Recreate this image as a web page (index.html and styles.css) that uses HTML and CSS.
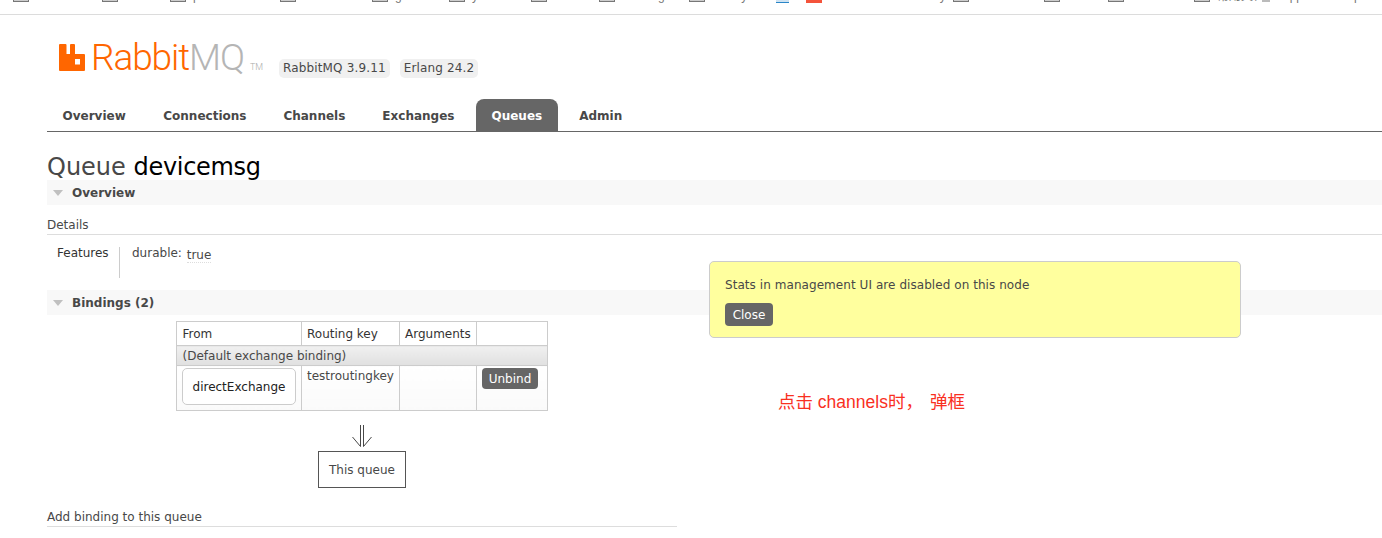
FILE: index.html
```html
<!DOCTYPE html>
<html lang="en">
<head>
  <meta charset="UTF-8" />
  <title>RabbitMQ Management</title>
  <link rel="stylesheet" href="styles.css">
</head>

<body>

  <!-- Bookmarks bar, cut off at the top -->
  <div class="bookmarks">
    <span class="bm"><i class="folder"></i>notes</span>
    <span class="bm"><i class="folder"></i>work</span>
    <span class="bm"><i class="folder"></i>pan</span>
    <span class="bm"><i class="folder"></i>tools</span>
    <span class="bm"><i class="folder"></i>go</span>
    <span class="bm"><i class="folder"></i>yaml</span>
    <span class="bm"><i class="folder"></i>docs</span>
    <span class="bm"><i class="folder"></i>learning</span>
    <span class="bm"><i class="folder"></i>history</span>
    <span class="bm"><i class="fav blue"></i></span>
    <span class="bm"><i class="fav red"></i>mathematics notes dy</span>
    <span class="bm"><i class="folder"></i>mail</span>
    <span class="bm"><i class="folder"></i>misc</span>
    <span class="bm"><i class="folder"></i>links</span>
    <span class="bm"><i class="folder"></i>常用文档</span>
    <span class="bm bm-app"><i class="fav grey"></i>app</span>
    <span class="bm">qtx</span>
  </div>

  <div class="page">
    <!-- Header -->
    <header class="header">
      <div class="logo">
        <svg class="logo-icon" width="26" height="27" viewBox="0 0 26 27">
          <path fill="#ff6600" fill-rule="evenodd" d="M1 0h5.500a1 1 0 0 1 1 1v9h3.500V1a1 1 0 0 1 1-1H15a1 1 0 0 1 1 1v9h9a1 1 0 0 1 1 1v15a1 1 0 0 1-1 1H1a1 1 0 0 1-1-1V1a1 1 0 0 1 1-1zM16 15v5.500h5V15z" />
        </svg>
        <span class="logo-rabbit">Rabbit</span><span class="logo-mq">MQ</span><span class="logo-tm">TM</span>
      </div>
      <span class="version">RabbitMQ 3.9.11</span>
      <span class="version">Erlang 24.2</span>
    </header>

    <!-- Navigation -->
    <nav class="tabs">
      <a href="#">Overview</a>
      <a href="#">Connections</a>
      <a href="#">Channels</a>
      <a href="#">Exchanges</a>
      <a href="#" class="active">Queues</a>
      <a href="#">Admin</a>
    </nav>

    <h1>Queue <b>devicemsg</b></h1>

    <div class="section-head"><i class="arrow"></i>Overview</div>
    <h3 class="subhead">Details</h3>
    <div class="features">
      <div class="features-label">Features</div>
      <div class="features-value">durable: <span class="tag">true</span></div>
    </div>

    <div class="section-head"><i class="arrow"></i>Bindings (2)</div>
    <div class="bindings">
      <table>
        <tr>
          <th class="col-from">From</th>
          <th class="col-key">Routing key</th>
          <th class="col-args">Arguments</th>
          <th class="col-btn"></th>
        </tr>
        <tr class="group"><td colspan="4">(Default exchange binding)</td></tr>
        <tr class="row">
          <td><span class="exchange">directExchange</span></td>
          <td>testroutingkey</td>
          <td></td>
          <td><button class="btn unbind">Unbind</button></td>
        </tr>
      </table>
      <svg class="arrow-down" width="20" height="22" viewBox="0 0 20 22">
        <path fill="none" stroke="#484848" stroke-width="1" d="M8.500 0v21.500M11.500 0v21.500M0.500 12l8 9.500M19.500 12l-8 9.500" />
      </svg>
      <div class="this-queue">This queue</div>
    </div>

    <h3 class="subhead add">Add binding to this queue</h3>
  </div>

  <!-- Popup -->
  <div class="popup">
    <p>Stats in management UI are disabled on this node</p>
    <button class="btn close">Close</button>
  </div>

  <div class="note">点击 channels时，&thinsp;&thinsp;弹框</div>

</body>
</html>
```

FILE: styles.css
```css
body {
  margin: 0;
  font-family: 'DejaVu Sans', sans-serif;
  font-size: 12px;
  color: #484848;
  background-color: #fff;
  overflow: hidden;
}

.bookmarks {
  display: grid;
  grid-template-columns: 89px 68px 110px 92px 77px 82px 68px 90px 87px 30px 147px 91px 64px 86px 68px 88px 32px;
  padding-left: 13px;
  height: 14px;
  border-bottom: 1px solid #dcdcdc;
  overflow: hidden;
  color: #777;
  font-family: 'Liberation Sans', 'Noto Sans CJK SC', sans-serif;
  font-size: 12px;
  line-height: 14px;
  white-space: nowrap;
}

.bm {
  display: flex;
  gap: 7px;
  height: 14px;
  margin-top: -11px;
  overflow: hidden;
}

.bm-app {
  gap: 13px;
}

.folder {
  flex: none;
  width: 16px;
  height: 13px;
  box-sizing: border-box;
  border: 1px solid #777;
  background-color: #ccc;
}

.fav {
  flex: none;
  height: 15px;
}

.fav.blue {
  width: 13px;
  background: linear-gradient(#2a86c8 70%, #cfe3f2 70%, #cfe3f2 85%, #2a86c8 85%);
}

.fav.red {
  width: 16px;
  background-color: #f4533b;
}

.fav.grey {
  width: 8px;
  height: 13px;
  background-color: #bbb;
}

.page {
  padding-left: 47px;
}

.header {
  display: flex;
  align-items: flex-start;
  height: 84px;
}

.logo {
  display: flex;
  align-items: baseline;
  margin: 23px 0 0 12px;
  width: 220px;
  font-family: 'Roboto', sans-serif;
  font-weight: 300;
  font-size: 37px;
  line-height: 40px;
  letter-spacing: -1.1px;
}

.logo-icon {
  align-self: flex-start;
  margin: 6px 6px 0 0;
}

.logo-rabbit {
  color: #ff6600;
}

.logo-mq {
  color: #b5b5b5;
}

.logo-tm {
  color: #aaa;
  font-size: 9px;
  letter-spacing: 0;
  margin-left: 6px;
}

.version {
  margin: 44px 10px 0 0;
  padding: 0 4px;
  line-height: 19px;
  letter-spacing: 0.15px;
  background-color: #f0f0f0;
  border-radius: 5px;
}

.tabs {
  display: flex;
  height: 32px;
  border-bottom: 1px solid #666;
}

.tabs a {
  padding: 0 16px;
  margin-right: 5px;
  line-height: 34px;
  font-weight: bold;
  font-size: 12px;
  color: #484848;
  text-decoration: none;
}

.tabs a:first-child {
  padding-left: 15.500px;
  padding-right: 16.500px;
}

.tabs a.active {
  margin-left: 1px;
  padding-left: 15px;
  background-color: #666;
  color: #fff;
  border-radius: 8px 8px 0 0;
}

h1 {
  margin: 23px 0 0;
  font-size: 24px;
  line-height: 25px;
  font-weight: normal;
  color: #484848;
}

h1 b {
  font-weight: normal;
  letter-spacing: -0.3px;
  color: #000;
}

.section-head {
  height: 25px;
  line-height: 26px;
  font-weight: bold;
  font-size: 12px;
  background-color: #f8f8f8;
}

.arrow {
  display: inline-block;
  width: 0;
  height: 0;
  margin: 0 9px 1px 6px;
  border-left: 5.500px solid transparent;
  border-right: 5.500px solid transparent;
  border-top: 6px solid #c0c0c0;
}

.subhead {
  margin: 12px 0 0;
  font-size: 12px;
  line-height: 17px;
  font-weight: normal;
  border-bottom: 1px solid #ddd;
}

.features {
  display: flex;
  margin: 12px 0 12px 10px;
  height: 31px;
  line-height: 13px;
}

.features-label {
  width: 62px;
  border-right: 1px solid #ccc;
  color: #333;
}

.features-value {
  padding-left: 12px;
}

.tag {
  display: inline-block;
  margin-left: 1px;
  vertical-align: -2px;
  border-bottom: 1px dotted #ddd;
}

.bindings {
  display: flex;
  flex-direction: column;
  align-items: center;
  margin-left: 129px;
  padding-top: 6px;
  width: 372px;
}

table {
  border-collapse: collapse;
  width: 371px;
  align-self: flex-start;
  table-layout: fixed;
}

th, td {
  box-sizing: border-box;
  border: 1px solid #ccc;
  padding: 3px 5px;
  font-weight: normal;
  text-align: left;
  vertical-align: top;
  line-height: 17px;
}

th {
  padding: 4px 5px 2px;
  color: #333;
}

.col-from { width: 125px; padding-left: 5.500px; }
.col-key { width: 98px; }
.col-args { width: 77px; padding-right: 0; }
.col-btn { width: 71px; }

.group td {
  padding: 1px 5.500px 0;
  line-height: 18px;
  background: linear-gradient(#f0f0f0, #e0e0e0);
}

.row td {
  height: 45px;
  padding: 2px 5px 0;
  background: linear-gradient(#fff, #fafafa);
}

.exchange {
  display: block;
  box-sizing: border-box;
  height: 37px;
  line-height: 36px;
  text-align: center;
  border: 1px solid #ccc;
  border-radius: 5px;
  background-color: #fff;
  color: #222;
}

.btn {
  border: none;
  background-color: #666;
  color: #fff;
  font-family: inherit;
  font-size: 12px;
  border-radius: 4px;
}

.unbind {
  display: block;
  width: 56px;
  height: 21px;
  padding: 0;
}

.arrow-down {
  margin-top: 14px;
  display: block;
}

.this-queue {
  box-sizing: border-box;
  width: 88px;
  height: 37px;
  margin-top: 4px;
  line-height: 36px;
  text-align: center;
  border: 1px solid #555;
}

.subhead.add {
  width: 630px;
  margin-top: 21px;
}

.popup {
  position: absolute;
  left: 709px;
  top: 261px;
  box-sizing: border-box;
  width: 532px;
  height: 77px;
  padding: 15px;
  background-color: #ffff9e;
  border: 1px solid #ccc;
  border-radius: 5px;
}

.popup p {
  margin: 0;
  line-height: 17px;
  letter-spacing: 0.06px;
}

.close {
  display: block;
  margin-top: 9px;
  width: 48px;
  height: 23px;
  padding: 0;
}

.note {
  position: absolute;
  left: 778px;
  top: 391px;
  font-family: 'Liberation Sans', 'Noto Sans CJK SC', sans-serif;
  font-size: 17.500px;
  line-height: 22px;
  color: #f9301f;
}
```
